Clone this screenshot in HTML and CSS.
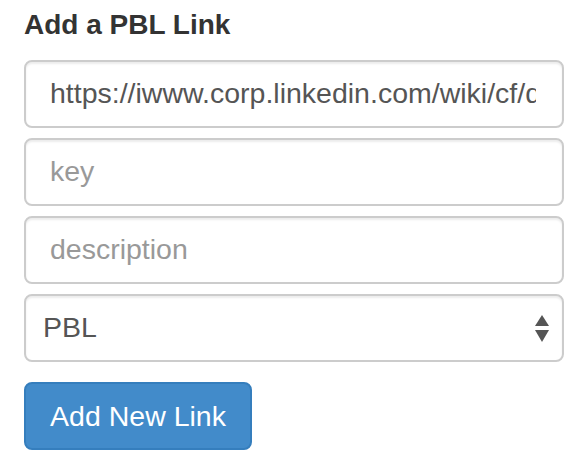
FILE: index.html
```html
<!DOCTYPE html>
<html>
<head>
<meta charset="utf-8">
<link rel="stylesheet" href="styles.css">
</head>
<body>
<form class="panel">
  <h3 class="title">Add a PBL Link</h3>
  <div class="fields">
    <input class="field" type="text" value="https://iwww.corp.linkedin.com/wiki/cf/display/ENG/PBL">
    <input class="field" type="text" placeholder="key">
    <input class="field" type="text" placeholder="description">
    <div class="select-wrap">
      <select class="field select">
        <option>PBL</option>
      </select>
      <svg class="arrows" width="16" height="28" viewBox="0 0 16 28">
        <path d="M8 0 L15 11 L1 11 Z" fill="#555"/>
        <path d="M1 15 L15 15 L8 27 Z" fill="#555"/>
      </svg>
    </div>
  </div>
  <button class="btn" type="button">Add New Link</button>
</form>
</body>
</html>
```
FILE: styles.css
```css
html, body {
  margin: 0;
  padding: 0;
  background: #fff;
}
.panel {
  padding: 5px 12px 0 24px;
  font-family: "Liberation Sans", Arial, sans-serif;
}
.title {
  margin: 0 0 15px 0;
  font-size: 28px;
  line-height: 40px;
  font-weight: bold;
  color: #333;
}
.fields {
  display: flex;
  flex-direction: column;
  gap: 10px;
  width: 540px;
}
.field {
  box-sizing: border-box;
  width: 100%;
  height: 68px;
  margin: 0;
  padding: 0 26px 1px 24px;
  font-family: "Liberation Sans", Arial, sans-serif;
  font-size: 28.5px;
  color: #555;
  background: #fff;
  border: 2px solid #ccc;
  border-radius: 8px;
  box-shadow: inset 0 2px 2px rgba(0, 0, 0, 0.075);
  outline: none;
}
.field::placeholder {
  color: #999;
}
.select-wrap {
  position: relative;
}
.select {
  -webkit-appearance: none;
  appearance: none;
  padding-left: 17px;
  padding-bottom: 2px;
}
.arrows {
  position: absolute;
  right: 14px;
  top: 21px;
}
.btn {
  margin-top: 20px;
  box-sizing: border-box;
  width: 228px;
  height: 68px;
  padding: 0;
  font-family: "Liberation Sans", Arial, sans-serif;
  font-size: 28.5px;
  color: #fff;
  background: #428bca;
  border: 2px solid #357ebd;
  border-radius: 8px;
}
```
